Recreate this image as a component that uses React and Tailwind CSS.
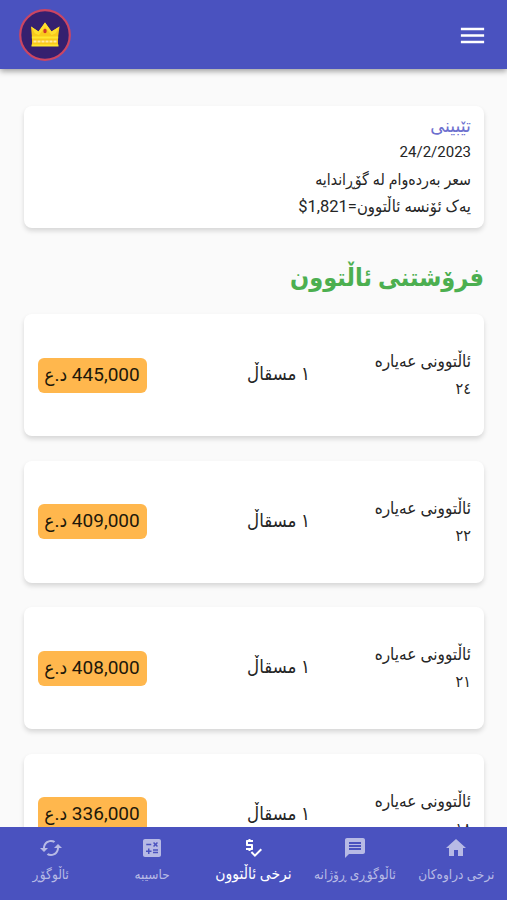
import {
  MdCached,
  MdCalculate,
  MdHome,
  MdMenu,
  MdMessage,
  MdPriceCheck,
} from "react-icons/md";

const prices = [
  { karat: "٢٤", price: "445,000" },
  { karat: "٢٢", price: "409,000" },
  { karat: "٢١", price: "408,000" },
  { karat: "١٨", price: "336,000" },
];

const tabs = [
  { label: "نرخی دراوەکان", icon: MdHome },
  { label: "ئاڵوگۆڕی ڕۆژانە", icon: MdMessage },
  { label: "نرخی ئاڵتوون", icon: MdPriceCheck, active: true },
  { label: "حاسیبە", icon: MdCalculate },
  { label: "ئاڵوگۆڕ", icon: MdCached },
];

function Logo() {
  return (
    <svg className="size-[52px]" viewBox="0 0 52 52">
      <circle cx="26" cy="26" r="24.8" fill="#35206f" stroke="#cb4562" strokeWidth="2.2" />
      <path d="M12 17.5l7.500 5L26 13.500l6.500 9L40.500 17.500l-1.500 11v8.500H13V28.500z" fill="#f9c91c" />
      <path d="M12 17.500l7.500 5L26 13.500l6.500 9L40.500 17.500l-4 7-4 1.500L26 18l-6 8-4-1.500z" fill="#ffdf2e" />
      <path d="M12.800 28.500h26.400M12.500 36.500h27" stroke="#ffe72e" strokeWidth="1.800" />
      <path d="M14.500 32.500h23.500" stroke="#ffe9a0" strokeWidth="1.800" strokeDasharray="3 1" />
      <ellipse cx="26" cy="22" rx="1.700" ry="2.200" fill="#d0372c" />
    </svg>
  );
}

function PriceCard({ karat, price }) {
  return (
    <div className="flex h-[122px] shrink-0 items-center rounded-lg bg-white pr-[13px] pl-[14px] shadow-[0_3px_5px_rgba(0,0,0,0.14)]">
      <div className="w-[161px] text-[17px] leading-7">
        <p className="whitespace-nowrap">ئاڵتوونی عەیارە</p>
        <p className="text-[16px]">{karat}</p>
      </div>
      <p className="flex-1 whitespace-nowrap text-[18.5px] leading-6 pb-0.5">١ مسقاڵ</p>
      <span className="flex h-[35px] w-[109px] items-center justify-center whitespace-nowrap rounded-md bg-[#ffb74d] text-[19px] text-[#21180a]">
        {price} د.ع
      </span>
    </div>
  );
}

export default function App() {
  return (
    <div
      dir="rtl"
      className="flex h-[900px] flex-col overflow-hidden bg-[#fafafa] font-['Roboto','DejaVu_Sans_Condensed','DejaVu_Sans',sans-serif] text-[#252525]"
    >
      <header className="z-10 flex h-[69px] shrink-0 items-center justify-between bg-[#4a52bf] px-[19px] text-white shadow-[0_2px_6px_rgba(0,0,0,0.4)]">
        <MdMenu className="mt-0.5 size-[31px]" />
        <Logo />
      </header>

      <main className="flex min-h-0 flex-1 flex-col overflow-hidden pt-[37px] pr-[23px] pl-[23.5px]">
        <section className="h-[122px] shrink-0 rounded-lg bg-white px-[13px] pt-[6px] text-[16px] leading-[27px] shadow-[0_3px_5px_rgba(0,0,0,0.14)]">
          <h2 className="h-[27px] text-[19.5px] text-[#6d70cf]">تێبینی</h2>
          <p className="h-[27px] text-[15px]">24/2/2023</p>
          <p className="h-[27px] text-[15.8px]">سعر بەردەوام لە گۆڕاندایە</p>
          <p className="h-[27px] text-[16.5px]">
            یەک ئۆنسە ئاڵتوون=<bdi dir="ltr">$1,821</bdi>
          </p>
        </section>
        <h1 className="mt-[30px] mb-4 h-10 shrink-0 text-[25px] leading-10 font-bold text-[#4caf50]">
          فرۆشتنی ئاڵتوون
        </h1>
        <div className="flex flex-col gap-[24.5px]">
          {prices.map((item) => (
            <PriceCard key={item.karat} {...item} />
          ))}
        </div>
      </main>

      <nav className="flex h-[73px] shrink-0 bg-[#4a52bf]">
        {tabs.map(({ label, icon: Icon, active }) => (
          <div
            key={label}
            className={`flex flex-1 flex-col items-center pt-[9px] ${active ? "text-white" : "text-[#b7bae5]"}`}
          >
            <Icon className="size-6" />
            <span
              className={`mt-1 leading-5 whitespace-nowrap ${active ? "text-[15.5px]" : "text-[13.5px]"}`}
            >
              {label}
            </span>
          </div>
        ))}
      </nav>
    </div>
  );
}
